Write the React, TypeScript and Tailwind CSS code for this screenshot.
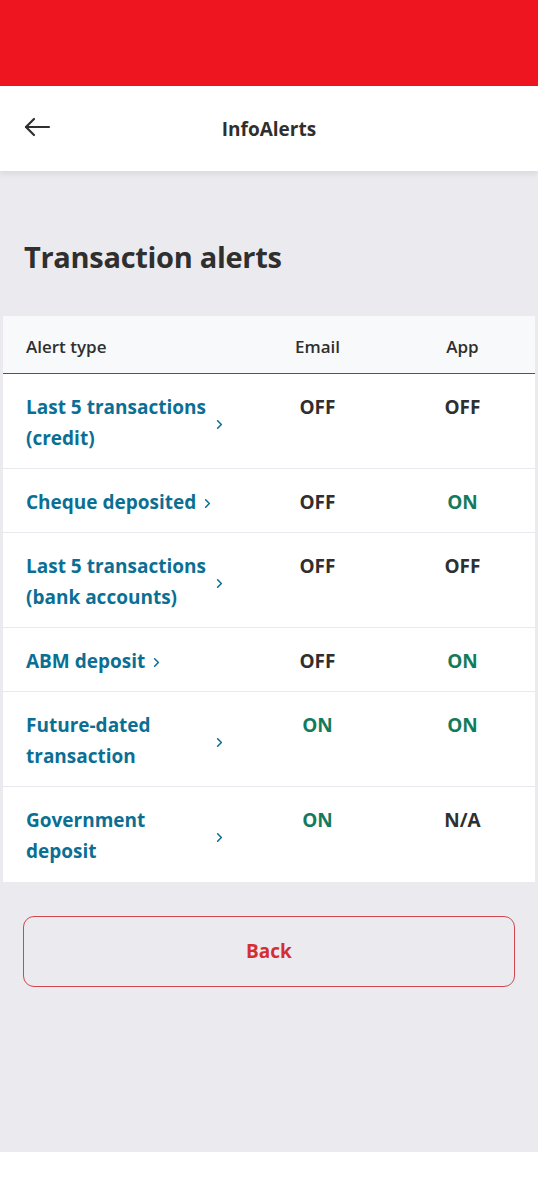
import { ChevronRight } from 'lucide-react'

type Status = 'ON' | 'OFF' | 'N/A'

interface Alert {
  name: string
  email: Status
  app: Status
}

const alerts: Alert[] = [
  { name: 'Last 5 transactions (credit)', email: 'OFF', app: 'OFF' },
  { name: 'Cheque deposited', email: 'OFF', app: 'ON' },
  { name: 'Last 5 transactions (bank accounts)', email: 'OFF', app: 'OFF' },
  { name: 'ABM deposit', email: 'OFF', app: 'ON' },
  { name: 'Future-dated transaction', email: 'ON', app: 'ON' },
  { name: 'Government deposit', email: 'ON', app: 'N/A' },
]

function StatusText({ value }: { value: Status }) {
  return (
    <span className={value === 'ON' ? 'text-[#137a5c]' : 'text-[#2f2f2f]'}>
      {value}
    </span>
  )
}

export default function App() {
  return (
    <div className="min-h-[1200px] flex flex-col bg-white font-['Open_Sans',sans-serif] text-[#2f2f2f]">
      {/* Status bar */}
      <div className="h-[86px] bg-[#ee1521]" />

      {/* Header */}
      <header className="relative z-10 h-[85px] bg-white flex items-center px-6 shadow-[0_3px_6px_rgba(0,0,0,0.08)]">
        <svg width="27" height="20" viewBox="0 0 27 20" fill="none" stroke="#2f2f2f" strokeWidth="2.2" strokeLinecap="round" strokeLinejoin="round" className="mt-[-4px]">
          <path d="M25 10H2" />
          <path d="M10 2L2 10l8 8" />
        </svg>
        <h1 className="flex-1 text-center text-[19px] font-bold mr-[27px] mt-[1px]">InfoAlerts</h1>
      </header>

      {/* Content */}
      <main className="bg-[#ebebef] h-[981px] pt-[66px]">
        <h2 className="px-6 text-[29px] font-bold tracking-[-0.3px] leading-[40px]">Transaction alerts</h2>

        <div className="mx-[3px] mt-[39px] bg-white">
          <div className="grid grid-cols-[242px_145px_145px] h-[58px] items-center bg-[#f8f9fb] border-b border-[#555] text-[17px] font-semibold">
            <div className="pl-[23px] pt-[4px]">Alert type</div>
            <div className="text-center pt-[4px]">Email</div>
            <div className="text-center pt-[4px]">App</div>
          </div>
          {alerts.map((a, i) => (
            <div
              key={a.name}
              className={`grid grid-cols-[242px_145px_145px] pt-[18px] pb-[14px] text-[19px] font-bold leading-[31px] ${i < alerts.length - 1 ? 'border-b border-[#e8e9ee]' : 'pb-[15px]'}`}
            >
              <div className="pl-[23px] flex items-center gap-[4px] text-[#0b6f94]">
                <span className="max-w-[182px]">{a.name}</span>
                <ChevronRight size={15} strokeWidth={2.5} className="shrink-0 mt-[2px]" />
              </div>
              <div className="text-center">
                <StatusText value={a.email} />
              </div>
              <div className="text-center">
                <StatusText value={a.app} />
              </div>
            </div>
          ))}
        </div>

        <div className="px-[23px] mt-[34px]">
          <button className="w-full h-[71px] rounded-[11px] border border-[#d0474f] text-[#d42e34] text-[19px] font-bold">
            Back
          </button>
        </div>
      </main>
    </div>
  )
}
